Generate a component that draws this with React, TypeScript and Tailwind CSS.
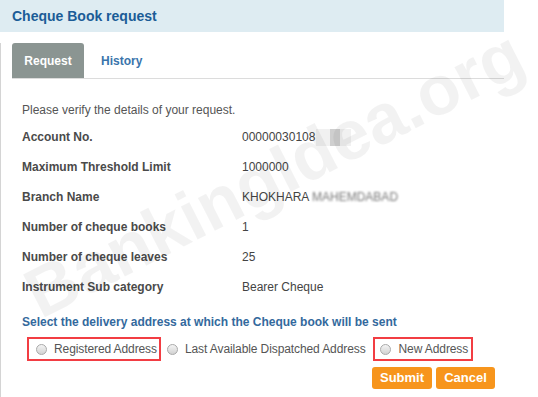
import React from "react";

const rows: [string, React.ReactNode][] = [
  [
    "Account No.",
    <span className="flex items-center">
      00000030108
      <span className="ml-[1px] flex h-[17px] w-[35px] items-center bg-[#f1f1f1]">
        <span className="ml-[14px] h-[17px] w-[10px] bg-[#cfcfcf]" />
      </span>
    </span>,
  ],
  ["Maximum Threshold Limit", "1000000"],
  [
    "Branch Name",
    <span>
      KHOKHARA <span className="inline-block blur-[1.2px] text-[#777]">MAHEMDABAD</span>
    </span>,
  ],
  ["Number of cheque books", "1"],
  ["Number of cheque leaves", "25"],
  ["Instrument Sub category", "Bearer Cheque"],
];

function Radio() {
  return (
    <span className="h-[11px] w-[11px] shrink-0 rounded-full border border-[#a9a9a9] bg-gradient-to-b from-[#f4f4f4] to-[#d2d2d2]" />
  );
}

export default function App() {
  return (
    <div
      className="relative h-[397px] w-[538px] overflow-hidden bg-white text-[12px] text-[#444]"
      style={{ fontFamily: '"Liberation Sans", Arial, sans-serif' }}
    >
      {/* header band */}
      <div className="flex h-[32px] w-[504px] items-center bg-[#deecf2] px-3">
        <h1 className="text-[14px] font-bold text-[#1b5c97]">Cheque Book request</h1>
      </div>

      <div className="h-[365px] w-[504px] border-l border-[#d4d4d4]">
        {/* tabs */}
        <div className="ml-[11px] mt-[11px] flex items-end border-b border-[#dcdcdc]">
          <div className="flex h-[35px] w-[72px] items-center justify-center rounded-t-[3px] bg-[#8b9592] font-bold text-white">
            Request
          </div>
          <div className="flex h-[35px] items-center pl-[17px] font-bold text-[#3a74ab]">History</div>
        </div>

        <div className="pl-[21px]">
          <p className="mt-[23px] flex h-[16px] items-center text-[#555]">Please verify the details of your request.</p>
          <div className="mt-[4px]">
            {rows.map(([label, value]) => (
              <div key={label} className="flex h-[30px] items-center">
                <div className="w-[220px] font-bold text-[#4a4a4a]">{label}</div>
                <div className="text-[#444]">{value}</div>
              </div>
            ))}
          </div>

          <div className="mt-[10px] flex h-[20px] items-center font-bold text-[#33699d]">
            Select the delivery address at which the Cheque book will be sent
          </div>

          <div className="mt-[5px] flex items-center whitespace-nowrap tracking-[-0.1px] text-[#555]">
            <label className="ml-[5px] flex h-[24px] items-center border-2 border-[#f23d43] pl-[7px] pr-[2px]">
              <Radio />
              <span className="ml-[7px]">Registered Address</span>
            </label>
            <label className="ml-[6px] flex items-center">
              <Radio />
              <span className="ml-[7px]">Last Available Dispatched Address</span>
            </label>
            <label className="ml-[7px] flex h-[24px] items-center border-2 border-[#f23d43] pl-[5px] pr-[3px]">
              <Radio />
              <span className="ml-[8px]">New Address</span>
            </label>
          </div>

          <div className="mt-[6px] flex justify-end gap-[4px] pr-[9px]">
            <button className="h-[22px] w-[60px] rounded-[3px] bg-[#f7951c] text-[13px] font-bold text-white">Submit</button>
            <button className="h-[22px] w-[59px] rounded-[3px] bg-[#f7951c] text-[13px] font-bold text-white">Cancel</button>
          </div>
        </div>
      </div>

      {/* watermark */}
      <div className="pointer-events-none absolute left-[30px] top-[246px] origin-left -rotate-[27deg] select-none whitespace-nowrap text-[70px] font-bold text-black/[0.05]">
        BankingIdea.org
      </div>
    </div>
  );
}
